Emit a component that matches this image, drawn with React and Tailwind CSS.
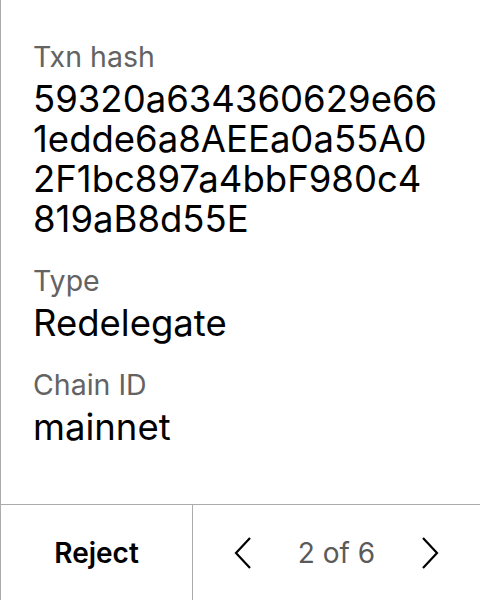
import React from 'react';

const fields = [
  { label: 'Type', value: 'Redelegate' },
  { label: 'Chain ID', value: 'mainnet' },
];

const ChevronLeft = () => (
  <svg width="18" height="32" viewBox="0 0 18 32" fill="none" stroke="black" strokeWidth="2.2">
    <path d="M16 1 L2 16 L16 31" />
  </svg>
);

const ChevronRight = () => (
  <svg width="18" height="32" viewBox="0 0 18 32" fill="none" stroke="black" strokeWidth="2.2">
    <path d="M2 1 L16 16 L2 31" />
  </svg>
);

const App = () => {
  return (
    <div className="h-[600px] w-[480px] flex flex-col bg-white border-l border-[#ababab] text-black font-['Inter',sans-serif]">
      <div className="flex-1 px-8 pt-[40px]">
        <div className="text-[28.5px] leading-[34px] text-[#636363]">Txn hash</div>
        <div className="mt-[5px] text-[36.5px] leading-[40px]">
          59320a634360629e66
          <br />
          1edde6a8AEEa0a55A0
          <br />
          2F1bc897a4bbF980c4
          <br />
          819aB8d55E
        </div>

        {fields.map(f => (
          <div key={f.label} className="mt-[25px]">
            <div className="text-[28.5px] leading-[34px] text-[#636363]">{f.label}</div>
            <div className="mt-[5px] text-[36.5px] leading-[40px]">{f.value}</div>
          </div>
        ))}
      </div>

      {/* Bottom actions */}
      <div className="h-[96px] flex border-t border-[#ababab]">
        <button className="w-[192px] flex items-center justify-center text-[28px] font-semibold border-r border-[#ababab]">
          Reject
        </button>
        <div className="flex-1 flex items-center justify-center gap-[46px]">
          <ChevronLeft />
          <span className="text-[28px] leading-[34px] text-[#5a5a5a]">2 of 6</span>
          <ChevronRight />
        </div>
      </div>
    </div>
  );
};

export default App;
